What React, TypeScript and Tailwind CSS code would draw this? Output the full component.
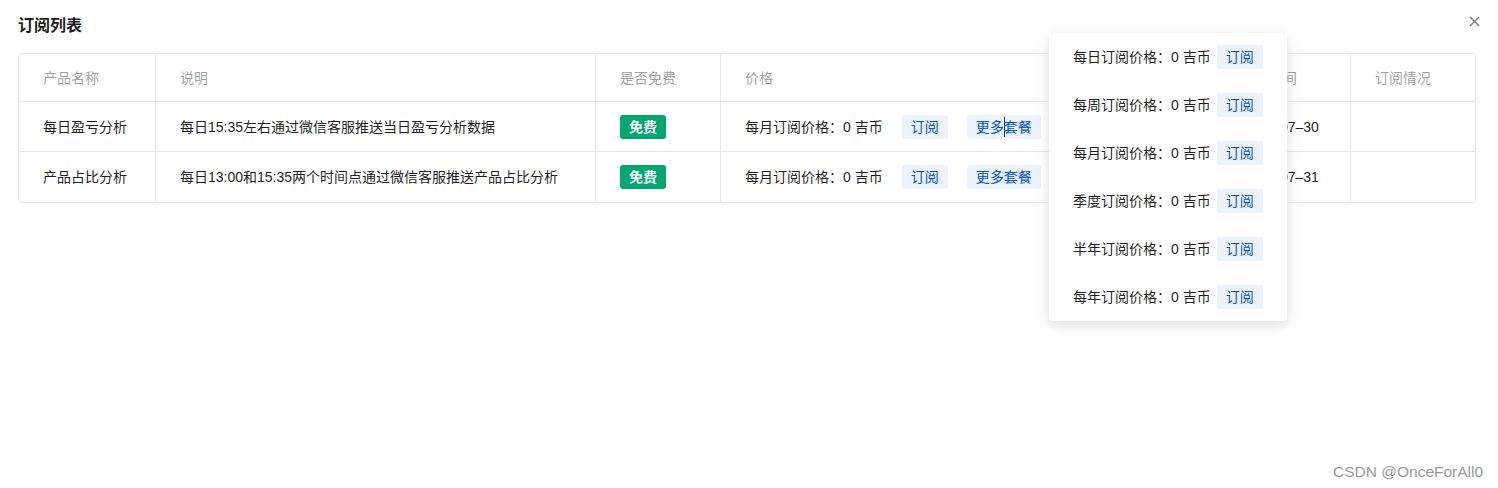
import React from "react";

const FONT = { fontFamily: '"Liberation Sans", "Noto Sans CJK SC", sans-serif' };

const cols = [
  "w-[137px]",
  "w-[440px]",
  "w-[125px]",
  "w-[496px]",
  "w-[134px]",
  "w-[124px]",
];

const headers = ["产品名称", "说明", "是否免费", "价格", "到期时间", "订阅情况"];

const rows = [
  {
    name: "每日盈亏分析",
    desc: "每日15:35左右通过微信客服推送当日盈亏分析数据",
    date: "2023–07–30",
    cursor: true,
  },
  {
    name: "产品占比分析",
    desc: "每日13:00和15:35两个时间点通过微信客服推送产品占比分析",
    date: "2023–07–31",
    cursor: false,
  },
];

const plans = ["每日", "每周", "每月", "季度", "半年", "每年"];

function LightBtn({ children, w, cursor }: { children: React.ReactNode; w: string; cursor?: boolean }) {
  return (
    <span
      className={`relative inline-flex h-[24px] ${w} items-center justify-center rounded-[3px] bg-[#ecf2fe] text-[14px] leading-[22px] text-[#0052d9]`}
    >
      {children}
      {cursor && <span className="absolute left-[37px] top-[2px] h-[20px] w-[1px] bg-[#0b3fb5]" />}
    </span>
  );
}

export default function App() {
  return (
    <div className="relative h-[488px] w-[1498px] overflow-hidden bg-white text-[rgba(0,0,0,0.9)]" style={FONT}>
      <div className="px-[18px] pt-[14px]">
        <h2 className="text-[16px] font-bold leading-[24px] text-[rgba(0,0,0,0.9)]">订阅列表</h2>
        <div className="mt-[15px] w-[1458px] rounded-[3px] border border-[#e7e7e7]">
          <div className="flex h-[48px] border-b border-[#e7e7e7]">
            {headers.map((h, i) => (
              <div
                key={h}
                className={`${cols[i]} flex items-center px-[24px] text-[14px] leading-[22px] text-[rgba(0,0,0,0.4)] ${
                  i < 5 ? "border-r border-[#e7e7e7]" : ""
                }`}
              >
                {h}
              </div>
            ))}
          </div>
          {rows.map((r, ri) => (
            <div key={r.name} className={`flex h-[50px] ${ri === 0 ? "border-b border-[#e7e7e7]" : ""}`}>
              <div className={`${cols[0]} flex items-center border-r border-[#e7e7e7] px-[24px] text-[14px] leading-[22px]`}>
                {r.name}
              </div>
              <div className={`${cols[1]} flex items-center border-r border-[#e7e7e7] px-[24px] text-[14px] leading-[22px]`}>
                {r.desc}
              </div>
              <div className={`${cols[2]} flex items-center border-r border-[#e7e7e7] px-[24px]`}>
                <span className="inline-flex h-[24px] w-[46px] items-center justify-center rounded-[3px] bg-[#00a870] text-[14px] font-bold leading-[22px] text-white">
                  免费
                </span>
              </div>
              <div className={`${cols[3]} flex items-center border-r border-[#e7e7e7] px-[24px] text-[14px] leading-[22px]`}>
                <span className="whitespace-nowrap">每月订阅价格：0 吉币</span>
                <span className="ml-[19px]">
                  <LightBtn w="w-[46px]">订阅</LightBtn>
                </span>
                <span className="ml-[19px]">
                  <LightBtn w="w-[74px]" cursor={r.cursor}>
                    更多套餐
                  </LightBtn>
                </span>
              </div>
              <div className={`${cols[4]} flex items-center whitespace-nowrap border-r border-[#e7e7e7] px-[24px] text-[14px] leading-[22px]`}>
                {r.date}
              </div>
              <div className={`${cols[5]} flex items-center px-[24px]`} />
            </div>
          ))}
        </div>
      </div>

      {/* close */}
      <button className="absolute left-[1468px] top-[15px] flex h-[12px] w-[12px] items-center justify-center text-[#777]">
        <svg width="11" height="11" viewBox="0 0 11 11" fill="none" stroke="currentColor" strokeWidth="1.4">
          <path d="M1 1L10 10M10 1L1 10" />
        </svg>
      </button>

      {/* popover */}
      <div className="absolute left-[1049px] top-[33px] w-[238px] rounded-[3px] bg-white shadow-[0_3px_14px_2px_rgba(0,0,0,0.08),0_6px_10px_rgba(0,0,0,0.04)]">
        {plans.map((p) => (
          <div key={p} className="flex h-[48px] items-center pl-[24px] text-[14px] leading-[22px]">
            <span className="whitespace-nowrap">{p}订阅价格：0 吉币</span>
            <span className="ml-[6px]">
              <LightBtn w="w-[46px]">订阅</LightBtn>
            </span>
          </div>
        ))}
      </div>

      {/* watermark */}
      <div className="absolute left-[1333px] top-[462px] text-[15.5px] leading-[20px] text-[#9a9a9a]" style={{ fontFamily: '"Liberation Sans", Arial, sans-serif' }}>
        CSDN @OnceForAll0
      </div>
    </div>
  );
}
